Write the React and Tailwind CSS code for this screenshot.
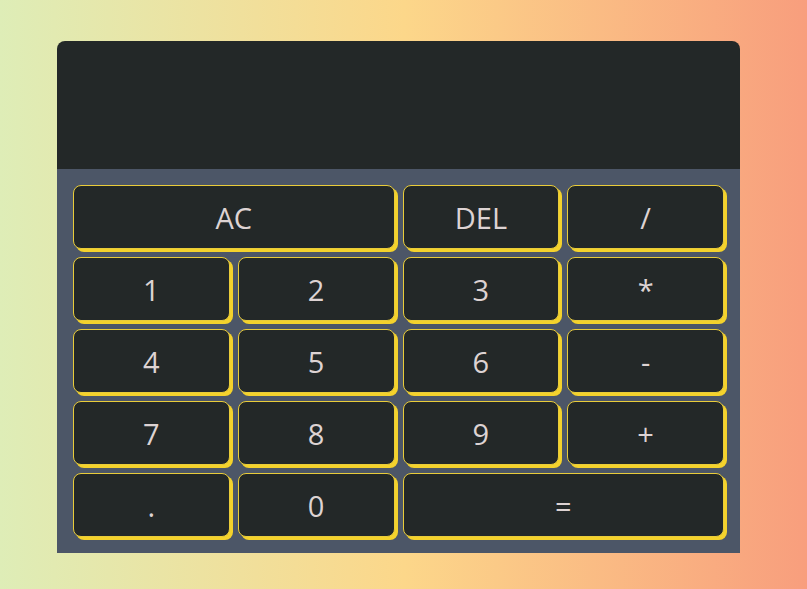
import React, { useState } from 'react';

const keys = [
  { label: 'AC', span: 'col-span-2' },
  { label: 'DEL' },
  { label: '/' },
  { label: '1' },
  { label: '2' },
  { label: '3' },
  { label: '*' },
  { label: '4' },
  { label: '5' },
  { label: '6' },
  { label: '-' },
  { label: '7' },
  { label: '8' },
  { label: '9' },
  { label: '+' },
  { label: '.' },
  { label: '0' },
  { label: '=', span: 'col-span-2' },
];

const App = () => {
  const [display, setDisplay] = useState('');

  const press = (k) => {
    if (k === 'AC') return setDisplay('');
    if (k === 'DEL') return setDisplay((d) => d.slice(0, -1));
    if (k === '=') {
      try {
        // eslint-disable-next-line no-new-func
        setDisplay(String(Function(`return (${display})`)()));
      } catch {
        setDisplay('Error');
      }
      return;
    }
    setDisplay((d) => d + k);
  };

  return (
    <div
      className="w-[807px] h-[589px] bg-[linear-gradient(90deg,#deedb7_0%,#fcd78a_50%,#f89e7d_100%)] pl-[57px] pt-[41px]"
      style={{ fontFamily: '"Open Sans", "Noto Sans", sans-serif' }}
    >
      <div className="w-[683px]">
        <div className="h-[128px] rounded-t-lg bg-[#232828] flex items-end justify-end px-6 pb-4 text-[40px] text-[#ddd3d3] overflow-hidden">
          {display}
        </div>
        <div className="bg-[#4c5667] p-4 grid grid-cols-4 gap-2">
          {keys.map((k) => (
            <button
              key={k.label}
              onClick={() => press(k.label)}
              className={`${k.span || ''} h-16 rounded-lg bg-[#232828] border border-[#e9cc3a] shadow-[3px_3px_0_#f4d22c] text-[29px] leading-none text-[#ddd3d3] font-normal`}
            >
              {k.label}
            </button>
          ))}
        </div>
      </div>
    </div>
  );
};

export default App;
